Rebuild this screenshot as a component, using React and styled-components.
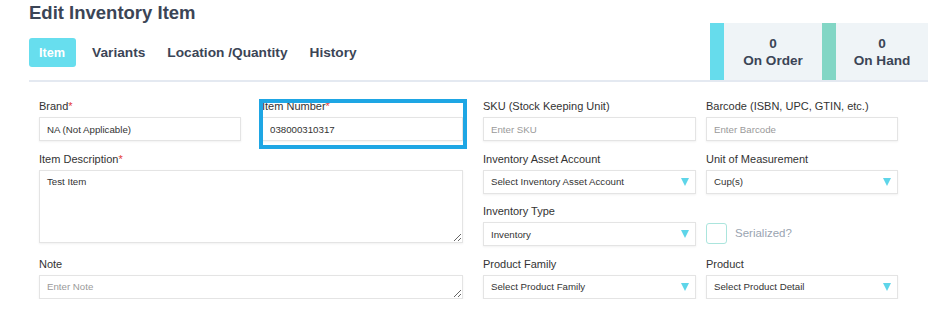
import React from 'react'
import styled, { createGlobalStyle } from 'styled-components'

const GlobalStyle = createGlobalStyle`
  body {
    margin: 0;
    background: #fff;
    font-family: "Liberation Sans", Arial, sans-serif;
  }
  * { box-sizing: border-box; }
`

const tabs = ['Item', 'Variants', 'Location /Quantity', 'History']

const stats = [
  { value: 0, label: 'On Order', accent: '#66dcec', width: 98 },
  { value: 0, label: 'On Hand', accent: '#82d6c5', width: 92 },
]

const Field = ({ label, required, children, ...rest }) => (
  <FieldWrap {...rest}>
    <Label>
      {label}
      {required && <Req>*</Req>}
    </Label>
    {children}
  </FieldWrap>
)

const Select = ({ value, muted }) => (
  <SelectBox>
    <SelectText $muted={muted}>{value}</SelectText>
    <Arrow />
  </SelectBox>
)

const App = () => {
  return (
    <Page>
      <GlobalStyle />
      <TopBar>
        <TitleBlock>
          <Title>Edit Inventory Item</Title>
          <TabList>
            {tabs.map((t, i) => (
              <Tab key={t} $active={i === 0}>{t}</Tab>
            ))}
          </TabList>
        </TitleBlock>
        <Stats>
          {stats.map(s => (
            <Stat key={s.label}>
              <Accent $color={s.accent} />
              <StatBody $width={s.width}>
                <span>{s.value}</span>
                <span>{s.label}</span>
              </StatBody>
            </Stat>
          ))}
        </Stats>
      </TopBar>

      <Form>
        <Field label="Brand" required $col={1} $w={202}>
          <Input readOnly defaultValue="NA (Not Applicable)" />
        </Field>
        <Field label="Item Number" required $col={2} $w={201}>
          <Input readOnly defaultValue="038000310317" />
          <Highlight />
        </Field>
        <Field label="SKU (Stock Keeping Unit)" $col={3} $w={213}>
          <Input readOnly placeholder="Enter SKU" />
        </Field>
        <Field label="Barcode (ISBN, UPC, GTIN, etc.)" $col={4} $w={192}>
          <Input readOnly placeholder="Enter Barcode" />
        </Field>

        <Field label="Item Description" required $col={1} $span={2} $rows={2} $w={424}>
          <TextArea readOnly defaultValue="Test Item" $h={73} />
        </Field>
        <Field label="Inventory Asset Account" $col={3} $w={213}>
          <Select value="Select Inventory Asset Account" />
        </Field>
        <Field label="Unit of Measurement" $col={4} $w={192}>
          <Select value="Cup(s)" />
        </Field>

        <Field label="Inventory Type" $col={3} $w={213}>
          <Select value="Inventory" />
        </Field>
        <Field label="" $col={4} $w={192}>
          <CheckRow>
            <CheckBox />
            <CheckLabel>Serialized?</CheckLabel>
          </CheckRow>
        </Field>

        <Field label="Note" $col={1} $span={2} $w={424}>
          <TextArea readOnly placeholder="Enter Note" $h={24} />
        </Field>
        <Field label="Product Family" $col={3} $w={213}>
          <Select value="Select Product Family" />
        </Field>
        <Field label="Product" $col={4} $w={192}>
          <Select value="Select Product Detail" />
        </Field>
      </Form>
    </Page>
  )
}

export default App

const Page = styled.div`
  padding: 0 12px 0 29px;
  color: #3b4556;
`

const TopBar = styled.div`
  display: flex;
  justify-content: space-between;
  align-items: flex-end;
  border-bottom: 2px solid #e4e9f1;
`

const TitleBlock = styled.div`
  display: flex;
  flex-direction: column;
  padding-bottom: 13px;
`

const Title = styled.h1`
  margin: 2px 0 0;
  font-size: 18.5px;
  line-height: 22px;
  font-weight: 700;
  color: #3b4556;
`

const TabList = styled.div`
  display: flex;
  align-items: center;
  gap: 22px;
  margin-top: 14px;
  height: 29px;
`

const Tab = styled.div`
  font-size: ${p => (p.$active ? '12.7px' : '13.7px')};
  font-weight: 700;
  height: 29px;
  line-height: 30px;
  color: ${p => (p.$active ? '#fff' : '#3b4556')};
  background: ${p => (p.$active ? '#67deee' : 'transparent')};
  border-radius: 3px;
  padding: ${p => (p.$active ? '0 11px 0 10px' : '0')};
  margin-right: ${p => (p.$active ? '-6px' : '0')};
`

const Stats = styled.div`
  display: flex;
  height: 57px;
`

const Stat = styled.div`
  display: flex;
`

const Accent = styled.div`
  width: 14px;
  background: ${p => p.$color};
`

const StatBody = styled.div`
  width: ${p => p.$width}px;
  background: #eff4f7;
  display: flex;
  flex-direction: column;
  align-items: center;
  justify-content: center;
  font-size: 13.6px;
  font-weight: 700;
  line-height: 17px;
  color: #3b4556;
`

const Form = styled.div`
  display: grid;
  grid-template-columns: 223px 221px 223px 192px;
  grid-auto-rows: 42px;
  row-gap: 10.5px;
  padding: 17px 0 0 10px;
  grid-auto-flow: dense;
`

const FieldWrap = styled.div`
  position: relative;
  grid-column: ${p => p.$col} / span ${p => p.$span || 1};
  grid-row: span ${p => p.$rows || 1};
  width: ${p => p.$w}px;
  display: flex;
  flex-direction: column;
`

const Label = styled.div`
  font-size: 11px;
  line-height: 14px;
  height: 14px;
  margin-bottom: 4px;
  color: #333;
`

const Req = styled.span`
  color: #e53a3a;
`

const Input = styled.input`
  height: 24px;
  width: 100%;
  border: 1px solid #e4e4e4;
  box-shadow: 0 1px 2px rgba(0, 0, 0, 0.06);
  padding: 0 7px;
  font-family: "Liberation Sans", Arial, sans-serif;
  font-size: 9.7px;
  color: #333;
  outline: none;

  &::placeholder { color: #9a9a9a; }
`

const TextArea = styled.textarea`
  height: ${p => p.$h}px;
  width: 100%;
  border: 1px solid #e4e4e4;
  box-shadow: 0 1px 2px rgba(0, 0, 0, 0.06);
  padding: 5px 7px;
  font-family: "Liberation Sans", Arial, sans-serif;
  font-size: 9.7px;
  line-height: 12px;
  color: #333;
  resize: vertical;
  outline: none;

  &::placeholder { color: #9a9a9a; }
`

const SelectBox = styled.div`
  height: 24px;
  border: 1px solid #e4e4e4;
  box-shadow: 0 1px 2px rgba(0, 0, 0, 0.06);
  display: flex;
  align-items: center;
  justify-content: space-between;
  padding: 0 6px 0 7px;
`

const SelectText = styled.span`
  font-size: 9.7px;
  color: ${p => (p.$muted ? '#9a9a9a' : '#333')};
`

const Arrow = styled.span`
  width: 0;
  height: 0;
  border-left: 4.5px solid transparent;
  border-right: 4.5px solid transparent;
  border-top: 8px solid #5ed5e9;
`

const Highlight = styled.div`
  position: absolute;
  left: -3px;
  top: 0;
  width: 208px;
  height: 50px;
  border: 4px solid #1ea6e4;
  pointer-events: none;
`

const CheckRow = styled.div`
  display: flex;
  align-items: center;
  gap: 8px;
  height: 22px;
`

const CheckBox = styled.div`
  width: 21px;
  height: 21px;
  border: 1.5px solid #abe5dd;
  border-radius: 3px;
`

const CheckLabel = styled.span`
  font-size: 11.5px;
  color: #9aa4b1;
`
